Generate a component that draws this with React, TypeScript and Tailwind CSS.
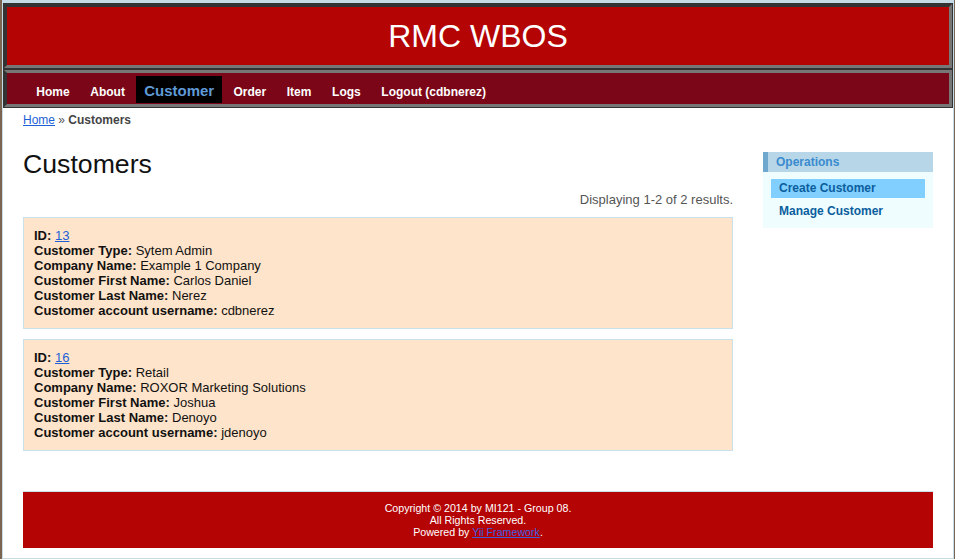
import React from "react";

const FONT = { fontFamily: '"Liberation Sans", Arial, Helvetica, sans-serif' };

type Customer = {
  id: string;
  type: string;
  company: string;
  first: string;
  last: string;
  username: string;
};

const customers: Customer[] = [
  { id: "13", type: "Sytem Admin", company: "Example 1 Company", first: "Carlos Daniel", last: "Nerez", username: "cdbnerez" },
  { id: "16", type: "Retail", company: "ROXOR Marketing Solutions", first: "Joshua", last: "Denoyo", username: "jdenoyo" },
];

function NavItem({ label, active }: { label: string; active?: boolean }) {
  if (active) {
    return (
      <span className="mx-[1px] flex h-[27px] items-center bg-black px-[8px] pt-[3px] text-[15px] font-bold text-[#5f9ad6]">
        {label}
      </span>
    );
  }
  return (
    <span className="flex h-[27px] items-center px-[10.3px] pt-[4px] text-[12px] font-bold text-white">{label}</span>
  );
}

function CustomerCard({ c }: { c: Customer }) {
  return (
    <div className="mt-[10px] border border-[#c9e0ed] bg-[#fee4ca] p-[10px] text-[13px] leading-[15px] text-[#111]">
      <div>
        <b>ID:</b> <a className="text-[#1d5fd6] underline">{c.id}</a>
      </div>
      <div>
        <b>Customer Type:</b> {c.type}
      </div>
      <div>
        <b>Company Name:</b> {c.company}
      </div>
      <div>
        <b>Customer First Name:</b> {c.first}
      </div>
      <div>
        <b>Customer Last Name:</b> {c.last}
      </div>
      <div>
        <b>Customer account username:</b> {c.username}
      </div>
    </div>
  );
}

export default function App() {
  return (
    <div className="flex min-h-[559px] w-full bg-white" style={FONT}>
      <div className="w-[2px] shrink-0 bg-[#7b6450]" />
      <div className="flex min-w-0 flex-1 flex-col border-x border-b border-t-[3px] border-[#c5dbe6] bg-white">
        {/* Header */}
        <div className="border border-[#333]">
          <div className="flex h-[64px] items-center justify-center border-[3px] border-b-[#777] border-l-[#333] border-r-[#777] border-t-[#333] bg-[#b40404]">
            <span className="text-[32px] leading-none text-white">RMC WBOS</span>
          </div>
        </div>
        {/* Nav */}
        <div className="border border-[#333]">
          <div className="flex h-[37px] items-start border-[3px] border-b-[#777] border-l-[#333] border-r-[#777] border-t-[#777] bg-[#7a0617] pl-[19px] pt-[3px]">
            <div className="flex">
              <NavItem label="Home" />
              <NavItem label="About" />
              <NavItem label="Customer" active />
              <NavItem label="Order" />
              <NavItem label="Item" />
              <NavItem label="Logs" />
              <NavItem label="Logout (cdbnerez)" />
            </div>
          </div>
        </div>
        {/* Breadcrumbs */}
        <div className="px-[20px] py-[5px] text-[12px] leading-[14px] text-[#555]">
          <a className="text-[#1d5fd6] underline">Home</a> » <span className="font-bold text-[#444]">Customers</span>
        </div>
        {/* Main */}
        <div className="flex">
          <div className="w-[750px] shrink-0 px-[20px] pb-[30px] pt-[17px]">
            <h1 className="h-[30px] text-[26.67px] font-normal leading-[30px] text-[#111]">Customers</h1>
            <div className="mt-[13px] text-right text-[13px] leading-[15px] text-[#555]">Displaying 1-2 of 2 results.</div>
            {customers.map((c) => (
              <CustomerCard key={c.id} c={c} />
            ))}
          </div>
          <div className="ml-[10px] w-[170px] shrink-0 pt-[20px]">
            <div className="border-l-[5px] border-[#6fa8cf] bg-[#b7d6e7] px-[8px] py-[3px] text-[12px] font-bold leading-[14px] text-[#3a8bcf]">
              Operations
            </div>
            <div className="flex flex-col gap-[4px] bg-[#effdff] px-[8px] pb-[7px] pt-[7px]">
              <div className="bg-[#80cfff] py-[2px] pl-[8px] text-[12px] font-bold leading-[15px] text-[#0b5e9e]">
                Create Customer
              </div>
              <div className="py-[2px] pl-[8px] text-[12px] font-bold leading-[15px] text-[#0b5e9e]">Manage Customer</div>
            </div>
          </div>
        </div>
        {/* Footer */}
        <div className="mx-[20px] mb-[10px] mt-[10px] border-t border-[#c9e0ed] bg-[#b40404] p-[10px] text-center text-[10.67px] leading-[12px] text-white">
          <div>Copyright © 2014 by MI121 - Group 08.</div>
          <div>All Rights Reserved.</div>
          <div>
            Powered by <a className="text-[#3b5fe0] underline">Yii Framework</a>.
          </div>
        </div>
      </div>
      <div className="w-px shrink-0 bg-[#7b6450]" />
    </div>
  );
}
